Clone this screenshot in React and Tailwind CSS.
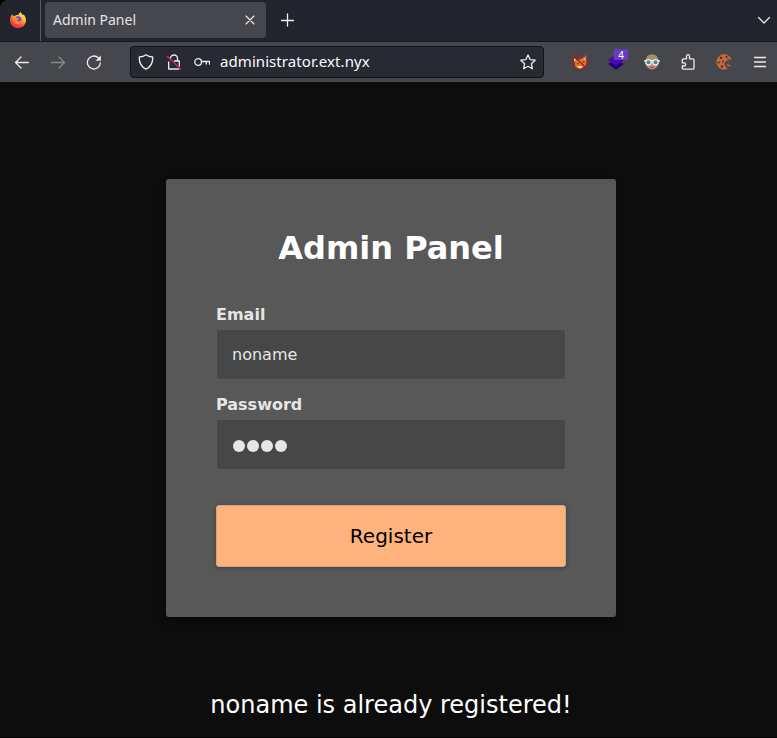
import React from "react";

const stroke = {
  fill: "none",
  stroke: "#ececf1",
  strokeWidth: 1.3,
  strokeLinecap: "round",
  strokeLinejoin: "round",
};

function Icon({ children, className = "" }) {
  return (
    <svg viewBox="0 0 16 16" className={`block h-4 w-4 shrink-0 ${className}`} {...stroke}>
      {children}
    </svg>
  );
}

function Slot({ children }) {
  return <div className="flex h-9 w-9 shrink-0 items-center justify-center">{children}</div>;
}

function Firefox() {
  return (
    <svg viewBox="0 0 16 16" className="block h-4 w-4">
      <defs>
        <linearGradient id="flame" x1="0.8" y1="0" x2="0.25" y2="1">
          <stop offset="0" stopColor="#fff14f" />
          <stop offset="0.4" stopColor="#ffb02e" />
          <stop offset="0.65" stopColor="#ff553f" />
          <stop offset="1" stopColor="#f0196b" />
        </linearGradient>
      </defs>
      <path d="M2.2 2.3 3.2 4 5 3.8C6.2 2.8 7.6 2.6 8.6 2.8 9 1.4 9.8.6 10.8 0c.3 1.500 1.300 2.200 2.400 3.300.3-.4.3-.8.2-1.300C15 3.700 16 6 16 8.300 16 12.700 12.500 16 8 16S0 12.600 0 8.200C0 5.900 1 3.900 2.200 2.300Z" fill="url(#flame)" />
      <circle cx="8" cy="7.700" r="3.500" fill="#7547d9" />
      <path d="M3.500 5.200c1.300-.4 2.700 0 3.500 1.100l2 .3c-.2 1-1.600 1-1.800 1.700.2 1.200 2.300 1.800 4.100.5-.2 2.300-2.200 3.600-4.300 3.300-2.800-.4-4.400-3.500-3.500-6.900Z" fill="#ff8b28" />
    </svg>
  );
}

function Fox() {
  return (
    <svg viewBox="0 0 16 16" className="block h-4 w-4">
      <path d="M1.800 4 5 6.200 9.500 4.700 13.800 1.500 15 7 13.800 11.500 8.500 15 3.500 13Z" fill="#d8781f" />
      <path d="m12 3 2-1.500.7 4-1.500 1ZM1.500 3.800l2.300 1.700-1.300 2.300ZM4.500 12.800l3-.8 3.500.4-3 2.600Z" fill="#eadbd0" />
      <path d="m5 9.500 1.700.4M10.500 8.500l1.800-1" stroke="#59321c" />
      <circle cx="8" cy="8" r="7.300" fill="none" stroke="#b5141d" strokeWidth="1.200" />
      <path d="m3 3 10 10" stroke="#b5141d" strokeWidth="1.300" />
    </svg>
  );
}

function Stack() {
  return (
    <div className="relative h-4 w-4">
      <svg viewBox="0 0 16 16" className="block h-4 w-4">
        <path d="m0 10 8-4.500 8 4.500-8 5.800Z" fill="#220078" />
        <path d="m0 6 8-5 8 5-8 6Z" fill="#4908b0" />
      </svg>
      <span className="absolute -top-[5px] left-[6px] flex h-[11px] w-[14px] items-center justify-center rounded-[1px] bg-[#6b3ac2] text-[10px] leading-none text-white">
        4
      </span>
    </div>
  );
}

function Goggles() {
  return (
    <svg viewBox="0 0 16 16" className="block h-4 w-4">
      <ellipse cx="8" cy="8" rx="6.500" ry="7.500" fill="#c9876b" />
      <path d="M1.500 6C2 2.500 4.500.4 8 .4S14 2.500 14.500 6Z" fill="#a98d66" />
      <path d="M.3 6h15.400v2H.3Z" fill="#e0e4e0" />
      <circle cx="4.500" cy="8.300" r="2.700" fill="#528791" stroke="#e5ece9" strokeWidth="1.300" />
      <circle cx="11.500" cy="8.300" r="2.700" fill="#528791" stroke="#e5ece9" strokeWidth="1.300" />
      <path d="M6 13.300h4" stroke="#9a4f3d" />
    </svg>
  );
}

function Cookie() {
  return (
    <svg viewBox="0 0 16 16" className="block h-4 w-4">
      <path d="M15.500 5A7.800 7.800 0 1 0 11.500 15L9 11.500 8.300 9.500 10 7Z" fill="#bd6b3d" />
      <path d="m10.500 10.500 2-.3.800 1.500-1.500 1ZM13.500 10.500l1.500.8-.8 1.400-1-.5ZM11.300 8.200l1.300-.5.300 1.200Z" fill="#bd6b3d" />
      <g fill="#602d20">
        <circle cx="5" cy="3.800" r="1.200" />
        <circle cx="10.500" cy="2.800" r="1.100" />
        <circle cx="2.800" cy="8.500" r="1.100" />
        <circle cx="7" cy="7.500" r="1" />
        <circle cx="6" cy="12.500" r="1.200" />
        <circle cx="12" cy="4.800" r=".7" />
      </g>
    </svg>
  );
}

function TabBar() {
  return (
    <div className="flex h-[42px] rounded-tl-lg border-b border-[#17181f] bg-[#23252e]">
      <div className="flex w-[41px] shrink-0 items-center border-r border-[#5a5b62] pl-[10px] pb-px">
        <Firefox />
      </div>
      <div className="ml-1 mt-[2px] flex h-9 w-[221px] items-center justify-between rounded bg-[#46474c] pl-2 pr-2">
        <span className="text-sm text-[#e4e4e8]">Admin Panel</span>
        <Icon><path d="m4 4 8 8M12 4l-8 8" strokeWidth="1.100" /></Icon>
      </div>
      <div className="ml-[14px] flex h-10 items-center">
        <Icon><path d="M7.500 2v12M1.500 8.500h12" /></Icon>
      </div>
      <div className="ml-auto mr-[5px] flex h-[39px] items-center">
        <Icon><path d="m2.500 5.500 5.500 5.500 5.500-5.500" /></Icon>
      </div>
    </div>
  );
}

function Toolbar() {
  return (
    <div className="flex h-10 items-center overflow-hidden bg-[#46474c] pl-1">
      <Slot><Icon><path d="M14.300 8.500H1.500M7 3 1.500 8.500 7 14" /></Icon></Slot>
      <Slot><Icon className="opacity-40"><path d="M1.500 8.500h13M9 3l5.500 5.500L9 14" /></Icon></Slot>
      <Slot>
        <Icon>
          <path d="M14.400 8.800A6.500 6.500 0 1 1 12.300 3.700" />
          <path d="M14.900 1.500v5.300H9.600Z" fill="#ececf1" stroke="none" />
        </Icon>
      </Slot>
      <div className="ml-[18px] flex h-8 w-[414px] shrink-0 items-center rounded border border-[#111219] bg-[#272933] px-[7px]">
        <Icon><path d="M8 .8c2 1.600 4.300 2.100 6.700 2.200.3 5-1.700 9.700-6.700 12.200C3 12.700 1 8 1.300 3 3.700 2.900 6 2.400 8 .8Z" /></Icon>
        <Icon className="ml-3">
          <path d="M4.500 4.500a3.500 3.500 0 0 1 7 0V7M8.500 7h4.800v5M2.700 8v7h10" />
          <path d="m1.500 2.500 13 12.500" stroke="#d0244a" strokeWidth="1.600" />
        </Icon>
        <Icon className="ml-3"><path d="M7.500 8a3.300 3.300 0 1 1-6.700 0 3.300 3.300 0 0 1 6.700 0ZM7.500 7.500h8v2.700M12.300 7.500V10" /></Icon>
        <span className="mb-px ml-[10px] text-[15px] tracking-[0.070px] text-[#fbfbfe]">administrator.ext.nyx</span>
        <Icon className="ml-auto"><path d="m8 .9 2.100 4.700 5.100.6-3.800 3.500 1 5.100L8 12.300l-4.400 2.500 1-5.100L.8 6.200l5.100-.6Z" /></Icon>
      </div>
      <div className="ml-[18px] flex shrink-0">
        <Slot><Fox /></Slot>
        <Slot><Stack /></Slot>
        <Slot><Goggles /></Slot>
        <Slot>
          <Icon><path d="M6.500 4.800V2.200a1.500 1.500 0 0 1 3 0v2.600h3.300a1.200 1.200 0 0 1 1.200 1.200v8a1.200 1.200 0 0 1-1.200 1.200H3.500A1.200 1.200 0 0 1 2.300 14v-2H4a1.600 1.600 0 0 0 0-3.200H2.300V6a1.200 1.200 0 0 1 1.200-1.200Z" /></Icon>
        </Slot>
        <Slot><Cookie /></Slot>
        <Slot><Icon><path d="M2.500 3.500h11M2.500 8h11M2.500 12.500h11" /></Icon></Slot>
      </div>
    </div>
  );
}

export default function App() {
  return (
    <div className="flex h-[738px] w-[777px] flex-col overflow-hidden bg-black">
      <header className="font-['Noto_Sans',sans-serif]">
        <TabBar />
        <Toolbar />
      </header>
      <main className="flex h-[655px] flex-col items-center bg-[#0d0d0d] pl-[5px] pt-[97px] font-['DejaVu_Sans',sans-serif]">
        <form className="flex h-[438px] w-[450px] flex-col rounded-[3px] bg-[#585858] px-[50px] pt-[51px] shadow-[0_4px_10px_rgba(0,0,0,0.3)]">
          <h1 className="text-center text-[32px] leading-[37px] font-bold text-white">Admin Panel</h1>
          <label className="mt-[38px] text-base leading-[20px] font-bold text-[#e6e6e6]">Email</label>
          <div className="mt-1 flex h-[51px] items-center rounded-[3px] border border-[#5b5b5b] bg-[#474747] px-[15px] text-base text-[#e6e6e6]">
            noname
          </div>
          <label className="mt-[15px] text-base leading-[20px] font-bold text-[#e6e6e6]">Password</label>
          <div className="mt-1 flex h-[51px] items-center gap-[2px] rounded-[3px] border border-[#5b5b5b] bg-[#474747] px-[15.500px] pt-[2px]">
            <span className="h-3 w-3 rounded-full bg-[#e6e6e6]" />
            <span className="h-3 w-3 rounded-full bg-[#e6e6e6]" />
            <span className="h-3 w-3 rounded-full bg-[#e6e6e6]" />
            <span className="h-3 w-3 rounded-full bg-[#e6e6e6]" />
          </div>
          <button type="button" className="mt-[35px] h-[62px] rounded-[3px] border border-[#d6a37c] bg-[#ffb37c] text-[20px] text-black shadow-[0_1px_4px_rgba(0,0,0,0.3)]">
            Register
          </button>
        </form>
        <p className="mt-[74px] text-2xl leading-[28px] text-white">noname is already registered!</p>
      </main>
    </div>
  );
}
